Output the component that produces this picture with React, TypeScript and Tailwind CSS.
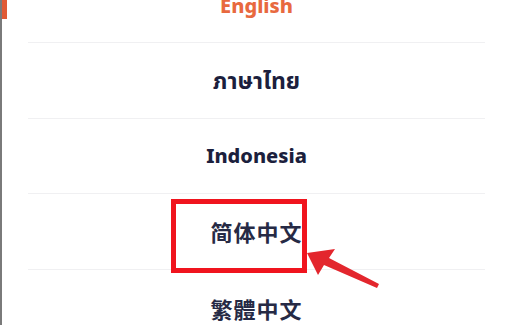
import React from "react";

const font = '"Noto Sans", "Open Sans", "Noto Sans Thai", "Noto Sans CJK SC", sans-serif';

export default function App() {
  return (
    <div className="relative w-[507px] h-[325px] overflow-hidden bg-white">
      <div className="flex h-full">
        <div className="w-[2px] h-full bg-[#7a7a7a] shrink-0" />
        <div className="relative flex-1">
          <div className="absolute left-0 top-0 w-[5px] h-[19px] bg-[#e05a35]" />
          <div className="mt-[-30px] pl-[26px] pr-[22px]" style={{ fontFamily: font }}>
            <div className="h-[73px] flex items-center justify-center border-b border-[#f0f0f2] text-[20px] font-extrabold text-[#e8693f]">
              English
            </div>
            <div className="h-[76px] flex items-center justify-center border-b border-[#f0f0f2] text-[23px] font-bold text-[#1c1f3d]">
              ภาษาไทย
            </div>
            <div className="h-[75px] flex items-center justify-center border-b border-[#f0f0f2] text-[20px] font-extrabold text-[#1c1f3d]">
              Indonesia
            </div>
            <div className="h-[76px] flex items-center justify-center border-b border-[#f0f0f2] text-[22px] font-semibold text-[#262a45] tracking-[1px]" style={{ fontFamily: '"Noto Sans CJK SC", sans-serif' }}>
              简体中文
            </div>
            <div className="h-[76px] flex items-center justify-center text-[22px] font-semibold text-[#262a45] tracking-[1px]" style={{ fontFamily: '"Noto Sans CJK TC", sans-serif' }}>
              繁體中文
            </div>
          </div>
        </div>
      </div>
      <div className="absolute left-[171px] top-[199px] w-[136px] h-[74px] border-[5px] border-[#f0141e]" />
      <svg className="absolute left-0 top-0 pointer-events-none" width="507" height="325" viewBox="0 0 507 325">
        <polygon
          points="307,253 335,249 329,258 379,284 377,288 324,265 318,275"
          fill="#e3262d"
        />
      </svg>
    </div>
  );
}
